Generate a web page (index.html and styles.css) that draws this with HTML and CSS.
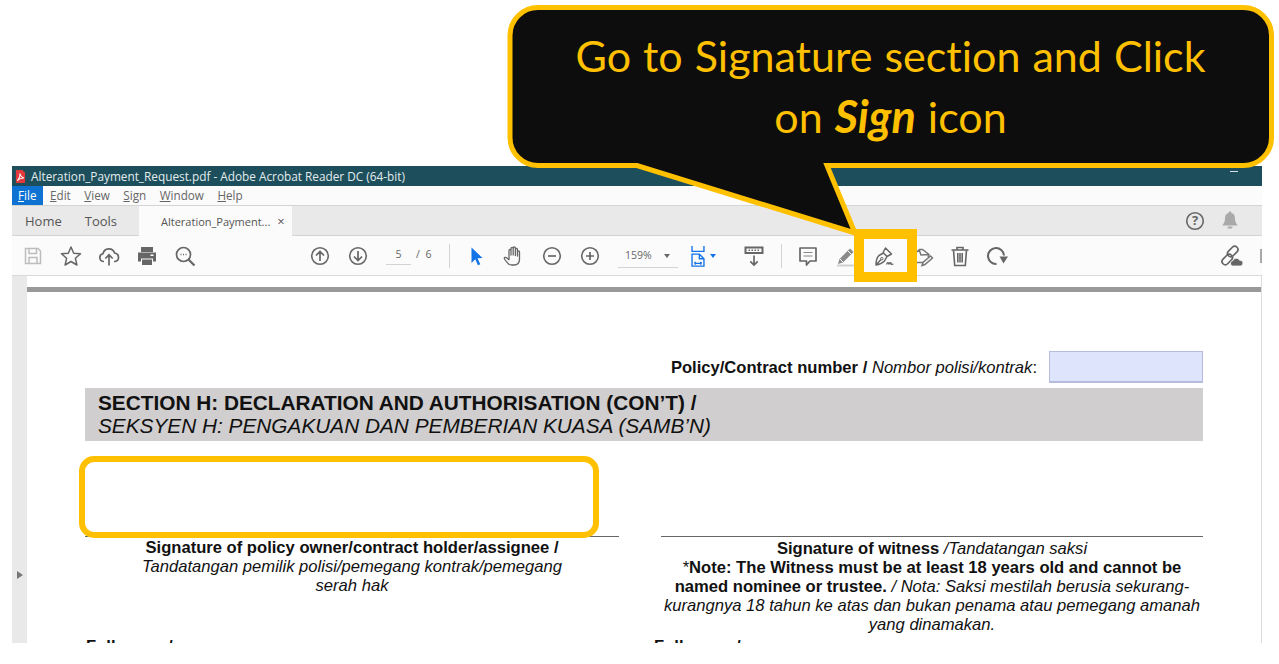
FILE: index.html
```html
<!DOCTYPE html>
<html lang="en">
<head>
  <meta charset="utf-8">
  <title>Go to Signature section</title>
  <link rel="stylesheet" href="styles.css">
</head>
<body>
  <div class="app">
    <div class="titlebar">
      <svg class="pdf-icon" viewBox="0 0 12 14"><path d="M1 0h7l3 3v10a1 1 0 0 1-1 1H2a1 1 0 0 1-1-1z" fill="#e4393a"/><path d="M2.500 11.500c2-2 3.200-5 2.800-8 .8 3 2 4.500 4.500 5.200-2.500-.2-5 .8-7.300 2.800z" fill="none" stroke="#fff" stroke-width="1.100"/></svg>
      <span class="title-text">Alteration_Payment_Request.pdf - Adobe Acrobat Reader DC (64-bit)</span>
      <span class="minimize"></span>
    </div>
    <div class="menubar">
      <span class="menu-item active"><u>F</u>ile</span>
      <span class="menu-item"><u>E</u>dit</span>
      <span class="menu-item"><u>V</u>iew</span>
      <span class="menu-item"><u>S</u>ign</span>
      <span class="menu-item"><u>W</u>indow</span>
      <span class="menu-item"><u>H</u>elp</span>
    </div>
    <div class="tabbar">
      <span class="tab-link home">Home</span>
      <span class="tab-link tools">Tools</span>
      <div class="doc-tab"><span>Alteration_Payment...</span><span class="tab-close">×</span></div>
      <div class="tab-right">
        <svg class="icon" viewBox="0 0 24 24"><circle cx="12" cy="12" r="8.300" fill="none" stroke="#666" stroke-width="1.600"/><text x="12" y="16" text-anchor="middle" class="help-mark">?</text></svg>
        <svg class="icon bell" viewBox="0 0 24 24"><path d="M12 3.500c1 0 1.500.7 1.500 1.500 2.700.8 3.500 3 3.500 5.500 0 3 .8 4.500 2.300 6.200v.8H4.700v-.8C6.200 15 7 13.500 7 10.500 7 8 7.800 5.800 10.500 5c0-.8.500-1.500 1.500-1.500z" fill="#a9a9a9"/><rect x="9.500" y="18.500" width="5" height="2" rx="1" fill="#a9a9a9"/></svg>
      </div>
    </div>
    <div class="toolbar">
      <div class="tool"><svg class="icon" viewBox="0 0 24 24"><path d="M4.500 4.500h12.500l2.500 2.500v12.500h-15z M8 4.500v5h7.500v-5 M8 19.500v-6h8v6" fill="none" stroke="#bdbdbd" stroke-width="1.500"/></svg></div>
      <div class="tool"><svg class="icon" viewBox="0 0 24 24"><path d="M12 3l2.700 6.200 6.800.6-5.100 4.500 1.500 6.700-5.900-3.500L6.100 21l1.500-6.700-5.100-4.500 6.800-.6z" fill="none" stroke="#666" stroke-width="1.500" stroke-linejoin="round"/></svg></div>
      <div class="tool"><svg class="icon" viewBox="0 0 24 24"><path d="M7 17.500H6.500A4 4 0 0 1 6 9.600 6 6 0 0 1 17.600 9 4.300 4.300 0 0 1 18 17.500h-1M12 21.500V11M8.300 14.500L12 10.800l3.700 3.700" fill="none" stroke="#666" stroke-width="1.700"/></svg></div>
      <div class="tool"><svg class="icon" viewBox="0 0 24 24"><path d="M6 3h12v5H6zM3 8.500h18v9h-3v-3H6v3H3zM7 15.500h10V21H7z" fill="#666"/><rect x="15.500" y="10.500" width="3" height="1.500" fill="#fff"/></svg></div>
      <div class="tool"><svg class="icon" viewBox="0 0 24 24"><circle cx="10.500" cy="10.500" r="7" fill="none" stroke="#666" stroke-width="1.700"/><path d="M15.500 15.500l6 6" stroke="#666" stroke-width="2.200"/><path d="M7.500 10.500h1M10 10.500h1M12.500 10.500h1" stroke="#666" stroke-width="1.400"/></svg></div>

      <div class="tool gap-nav"><svg class="icon" viewBox="0 0 24 24"><circle cx="12" cy="12" r="8.300" fill="none" stroke="#666" stroke-width="1.600"/><path d="M12 17V7.500M8 11.500l4-4 4 4" fill="none" stroke="#666" stroke-width="1.700"/></svg></div>
      <div class="tool"><svg class="icon" viewBox="0 0 24 24"><circle cx="12" cy="12" r="8.300" fill="none" stroke="#666" stroke-width="1.600"/><path d="M12 7v9.500M8 12.500l4 4 4-4" fill="none" stroke="#666" stroke-width="1.700"/></svg></div>
      <div class="page-box"><span class="page-num">5</span><span class="page-total">/ 6</span></div>
      <span class="sep"></span>
      <div class="tool"><svg class="icon" viewBox="0 0 24 24"><path d="M7.500 3.500l11 10.500-5 .3 2.800 6-2.400 1-2.600-6L7.500 19z" fill="#1473e6"/></svg></div>
      <div class="tool"><svg class="icon" viewBox="0 0 24 24"><path d="M6.500 20c-1.500-2-4-4-4.200-5.500-.1-1 1.300-1.500 2.200-.8l2.500 2V6.500c0-1.500 2-1.500 2 0V11 4.500c0-1.500 2.200-1.500 2.200 0V11 4c0-1.500 2.200-1.500 2.200 0v7.500-6c0-1.500 2.100-1.500 2.100 0V12 8c0-1.400 2-1.400 2 0v7c0 3.500-2 6-5.500 6H10c-1.500 0-2.500-.3-3.500-1z" fill="none" stroke="#666" stroke-width="1.300" stroke-linejoin="round"/></svg></div>
      <div class="tool"><svg class="icon" viewBox="0 0 24 24"><circle cx="12" cy="12" r="8.300" fill="none" stroke="#666" stroke-width="1.600"/><path d="M8 12h8" stroke="#666" stroke-width="1.700"/></svg></div>
      <div class="tool"><svg class="icon" viewBox="0 0 24 24"><circle cx="12" cy="12" r="8.300" fill="none" stroke="#666" stroke-width="1.600"/><path d="M8 12h8M12 8v8" stroke="#666" stroke-width="1.700"/></svg></div>
      <div class="zoom-box"><span>159%</span><span class="caret"></span></div>
      <div class="fit-box">
        <svg class="fit-icon" viewBox="0 0 17 24"><path d="M2 1v6h13V1M2 23V10h8l5 5v8zM10 10v5h5M4.500 20h8M4.500 20l1.500-1.300M4.500 20l1.500 1.300M12.500 20L11 18.700M12.500 20L11 21.300" fill="none" stroke="#1473e6" stroke-width="1.500"/></svg>
        <span class="caret blue"></span>
      </div>
      <div class="tool"><svg class="icon" viewBox="0 0 24 24"><path d="M3.500 3.500h17v5.500h-17z" fill="none" stroke="#666" stroke-width="2"/><path d="M6.500 6.300h11" stroke="#666" stroke-width="1.500" stroke-dasharray="1.500 1.500"/><path d="M12 11.500v9.500M8.300 17.300L12 21l3.700-3.700" fill="none" stroke="#666" stroke-width="1.700"/></svg></div>
      <span class="sep sep-late"></span>
      <div class="tool"><svg class="icon" viewBox="0 0 24 24"><path d="M4 4h16v13h-6l-3.500 4v-4H4z" fill="none" stroke="#666" stroke-width="1.700" stroke-linejoin="round"/><path d="M7.500 8.500h9M7.500 12h9" stroke="#888" stroke-width="1.200"/></svg></div>
      <div class="tool"><svg class="icon" viewBox="0 0 24 24"><path d="M4 20l1.500-5L16 4.500 19.500 8 9 18.500z" fill="#8a8a8a"/><path d="M6 15l3 3M14 7l3 3" stroke="#fbfbfb" stroke-width="1"/><path d="M3 21.500h18" stroke="#d0d0d0" stroke-width="2"/></svg></div>
      <div class="tool"><svg class="icon" viewBox="0 0 24 24"><path d="M4 21c0-4 .5-7 3-9.500l4.500-2.500 3.500 3.500-2.500 4.500c-2.500 2.500-4.500 3.500-8.500 4zM4 21l5-5.500M11 8.500l2.500-4.500 6 6-4.500 2.500" fill="none" stroke="#666" stroke-width="1.500" stroke-linejoin="round"/><circle cx="9.800" cy="14.600" r="1.200" fill="none" stroke="#666"/><path d="M14.500 20.500c.8-2.500 1.500-2.500 2 0 .5-2.500 1-2.500 1.500 0 .5-2.500 1-2.500 1.500 0l2-.5" fill="none" stroke="#666" stroke-width="1.200"/></svg></div>
      <div class="tool"><svg class="icon" viewBox="0 0 24 24"><path d="M13 18.500H5.500L3.500 11l6-5.500h3l6.500 5-1 2.500M9 5.500L11 11l8-.5" fill="none" stroke="#777" stroke-width="1.500"/><path d="M12 21.500l1-3 7.500-6.500 2 2-7.500 6.500z" fill="none" stroke="#777" stroke-width="1.500"/></svg></div>
      <div class="tool"><svg class="icon" viewBox="0 0 24 24"><path d="M3.500 6h17M9 6V3.500h6V6M5.500 6l1.200 15.500h10.600L18.500 6M9.800 9v9.500M12 9v9.500M14.200 9v9.500" fill="none" stroke="#666" stroke-width="1.600"/></svg></div>
      <div class="tool"><svg class="icon" viewBox="0 0 24 24"><path d="M10.500 20A8 8 0 1 1 18 11.500" fill="none" stroke="#666" stroke-width="2.100"/><path d="M13.500 12.500h8.500l-4.500 7z" fill="#666"/></svg></div>

      <div class="tool link-tool"><svg class="icon" viewBox="0 0 24 24"><rect x="10.500" y="1.500" width="6.500" height="12" rx="3.250" transform="rotate(45 13.750 7.500)" fill="none" stroke="#666" stroke-width="1.700"/><rect x="5" y="9.500" width="6.500" height="12" rx="3.250" transform="rotate(45 8.250 15.500)" fill="none" stroke="#666" stroke-width="1.700"/><path d="M13.500 22a2.800 2.800 0 0 1 .5-5.500 3.500 3.500 0 0 1 6.500-.3 2.900 2.900 0 0 1 1 5.800z" fill="#666" stroke="#fbfbfb" stroke-width=".8"/></svg></div>
      <span class="cut-tool"></span>
    </div>
    <div class="workspace">
      <div class="sidepanel"><span class="side-arrow"></span></div>
      <div class="page">
        <div class="page-edge"></div>
        <div class="form">
          <div class="policy-row">
            <span><b>Policy/Contract number /</b> <i>Nombor polisi/kontrak</i>:</span>
            <span class="policy-field"></span>
          </div>
          <div class="section-bar">
            <b>SECTION H: DECLARATION AND AUTHORISATION (CON’T) /</b><br>
            <i>SEKSYEN H: PENGAKUAN DAN PEMBERIAN KUASA (SAMB’N)</i>
          </div>
          <div class="sign-cols">
            <div class="sign-col">
              <div class="sign-text">
                <b>Signature of policy owner/contract holder/assignee /</b><br>
                <i>Tandatangan pemilik polisi/pemegang kontrak/pemegang<br>serah hak</i>
              </div>
              <div class="fullname"><b>Full name /</b></div>
            </div>
            <div class="sign-col">
              <div class="sign-text witness-text">
                <b>Signature of witness</b> <i>/Tandatangan saksi</i><br>
                *<b>Note: The Witness must be at least 18 years old and cannot be<br>named nominee or trustee.</b> <i>/ Nota: Saksi mestilah berusia sekurang-<br>kurangnya 18 tahun ke atas dan bukan penama atau pemegang amanah<br>yang dinamakan.</i>
              </div>
              <div class="fullname witness-name"><b>Full name /</b></div>
            </div>
          </div>
        </div>
      </div>
    </div>
  </div>

  <!-- annotations drawn over the screenshot -->
  <div class="callout">
    <svg class="callout-shape" viewBox="0 0 775 240"><path d="M31 2.500H736.500A28 28 0 0 1 764.500 30.500V132.500A28 28 0 0 1 736.500 160.500H320L348 228 130 160.500H31A28 28 0 0 1 3 132.500V30.500A28 28 0 0 1 31 2.500Z" fill="#0d0d0d" stroke="#ffc000" stroke-width="5"/></svg>
    <div class="callout-text">Go to Signature section and Click<br>on <b class="sign-word"><i>Sign</i></b> icon</div>
  </div>
  <div class="mark-sign"></div>
  <div class="mark-box"></div>
</body>
</html>
```

FILE: styles.css
```css
/* page */
* { box-sizing: border-box; }
html, body { margin: 0; padding: 0; width: 100%; height: 100%; overflow: hidden; background: #fff; }
body { padding: 166px 0 0 12px; font-family: "Open Sans", sans-serif; position: relative; }
.app { width: 1250px; height: 477px; display: flex; flex-direction: column; overflow: hidden; }
.icon { width: 24px; height: 24px; display: block; }

/* window chrome */
.titlebar { height: 20px; flex: none; background: #1c4e5b; color: #e4ecee; display: flex; align-items: center; padding-left: 3px; font-size: 11.800px; }
.pdf-icon { width: 11px; height: 13px; margin-right: 5px; }
.minimize { width: 8px; height: 1px; background: #d5dfe2; margin: -10px 24px 0 auto; }
.menubar { height: 20px; flex: none; background: #fbfbfb; border-bottom: 1px solid #d4d4d4; display: flex; font-size: 11.700px; color: #666; }
.menu-item { padding: 1px 6px 0; margin-right: 1.500px; }
.menu-item.active { background: #0d72d2; color: #fff; }
.tabbar { height: 30px; flex: none; background: #e9e9e9; border-bottom: 1px solid #d4d4d4; display: flex; align-items: center; font-size: 13px; color: #555; }
.tab-link.home { margin-left: 13px; }
.tab-link.tools { margin-left: 23px; }
.doc-tab { width: 153px; height: 30px; margin: 0 0 -1px 22px; padding-left: 22px; background: #fbfbfb; display: flex; align-items: center; font-size: 11px; }
.tab-close { margin-left: 7px; font-size: 13px; color: #555; }
.tab-right { margin-left: auto; margin-right: 20px; display: flex; gap: 11px; }

/* toolbar */
.toolbar { height: 40px; flex: none; background: #fbfbfb; border-bottom: 1px solid #d9d9d9; display: flex; align-items: center; padding-left: 2px; }
.tool { width: 38px; height: 38px; flex: none; display: flex; align-items: center; justify-content: center; }
.gap-nav { margin-left: 97px; }
.page-box { width: 72px; display: flex; margin-left: 9px; font-size: 10.500px; color: #666; }
.page-num { width: 25px; padding-bottom: 3px; text-align: center; border-bottom: 1px solid #d4d4d4; }
.page-total { margin-left: 5px; word-spacing: 3px; }
.sep { width: 1px; height: 24px; flex: none; background: #d4d4d4; }
.toolbar > .sep { margin-right: 7px; }
.page-box + .sep { margin-left: -9px; }
.toolbar > .sep-late { margin: 0 7px 0 8px; }
.zoom-box { width: 60px; height: 24px; margin-left: 9px; padding: 4px 0 0 7px; display: flex; font-size: 10.500px; color: #666; border-bottom: 1px solid #d4d4d4; }
.caret { width: 0; height: 0; border: 3.500px solid transparent; border-top: 4px solid #666; border-bottom: 0; margin: 6px 0 0 12px; }
.caret.blue { border-top-color: #1473e6; margin: 0 0 0 4px; }
.fit-box { width: 57px; display: flex; align-items: center; padding-left: 12px; }
.fit-icon { width: 16px; height: 22px; }
.link-tool { margin-left: auto; margin-right: 10px; }
.cut-tool { width: 2px; height: 14px; background: #aaa; flex: none; }
.help-mark { font: bold 13px "Open Sans", sans-serif; fill: #666; }
.bell { margin-top: -1px; }

/* document area */
.workspace { flex: 1; min-height: 0; display: flex; background: #fff; }
.sidepanel { width: 15px; flex: none; background: #e9e9e9; display: flex; align-items: center; justify-content: center; padding-top: 231px; }
.side-arrow { width: 0; height: 0; border: 4.500px solid transparent; border-left: 6px solid #777; border-right: 0; }
.page { flex: 1; min-width: 0; padding-top: 11px; border-right: 1px solid #dcdcdc; overflow: hidden; }
.page-edge { height: 5px; background: #999; margin-right: -1px; }
.form { padding: 59px 58px 0; font-family: "Liberation Sans", Arial, sans-serif; font-size: 16.600px; color: #111; }
.policy-row { display: flex; justify-content: flex-end; align-items: flex-start; gap: 12px; line-height: 34px; height: 32px; }
.policy-field { width: 154px; height: 32px; background: #dfe4fd; border: 1px solid #b5bcdd; border-width: 1px 1px 2px 1px; }
.section-bar { height: 53px; margin-top: 5px; padding: 3px 0 0 13px; background: #d0cece; font-size: 20.800px; line-height: 23px; white-space: nowrap; }
.sign-cols { display: grid; grid-template-columns: 534px 542px; gap: 42px; margin-top: 95px; }
.sign-col { border-top: 1px solid #666; text-align: center; white-space: nowrap; }
.sign-text { height: 100px; line-height: 19px; padding-top: 1px; }
.witness-text { padding-top: 2px; }
.fullname { text-align: left; margin-left: 1px; }
.witness-name { margin-left: -7px; }

/* annotations */
.callout { position: absolute; left: 507px; top: 5px; width: 775px; height: 240px; }
.callout-shape { display: block; width: 775px; height: 240px; }
.callout-text { position: absolute; left: 0; top: 20px; width: 767px; text-align: center; font-family: Lato, sans-serif; font-size: 43px; line-height: 61px; color: #ffc000; font-variant-ligatures: none; word-spacing: 1px; }
.sign-word { font-size: 45px; }
.mark-sign { position: absolute; left: 854px; top: 229px; width: 63px; height: 53px; border: 10px solid #ffc000; }
.mark-box { position: absolute; left: 79px; top: 456px; width: 520px; height: 82px; border: 6px solid #ffc000; border-radius: 15px; }
```
